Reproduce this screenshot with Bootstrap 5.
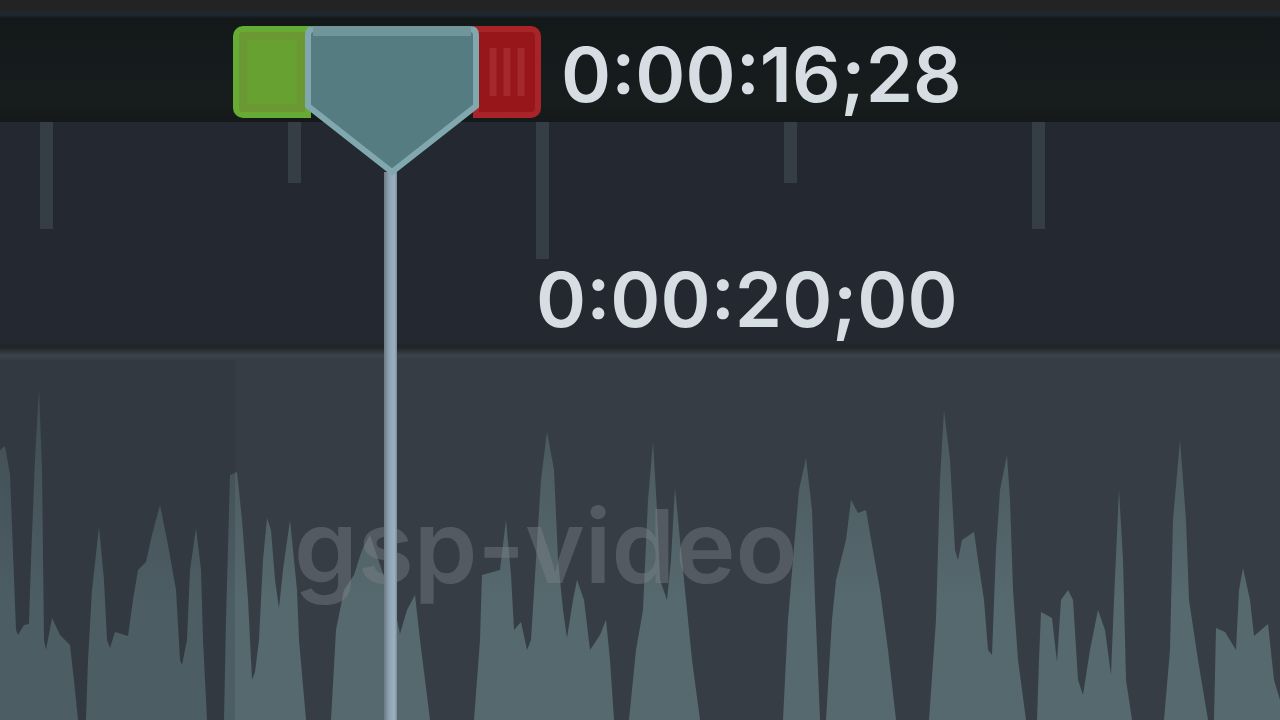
<!DOCTYPE html>
<html lang="en">
<head>
<meta charset="utf-8">
<meta name="viewport" content="width=device-width, initial-scale=1">
<title>Timeline</title>
<link href="https://cdn.jsdelivr.net/npm/bootstrap@5.3.0/dist/css/bootstrap.min.css" rel="stylesheet">
<style>
  body { background: #363d45; font-family: Inter, "Liberation Sans", sans-serif; }
  .top-edge { height: 18px; background: linear-gradient(#232323 0 10px, #20262e 11px 15px, #151b1d); }
  .scrub-bar { height: 104px; padding-left: 233px; background: linear-gradient(#131819, #161b1d 50%, #171c1c 80%, #15191b); }
  .timecode { font-size: 76px; line-height: 80px; font-weight: 600; color: #d6dde3; white-space: nowrap; }
  .scrub-time { padding-left: 20px; }
  .trim { height: 92px; border: 6px solid; }
  .trim-in { width: 78px; background: #67a132; border-color: #65ab34; border-radius: 10px 0 0 10px; box-shadow: inset 0 0 0 8px #6c9833; }
  .trim-out { width: 68px; margin-left: -6px; border-color: #a82428; border-radius: 0 10px 10px 0; background: #971619; }
  .trim-out svg { width: 44px; height: 48px; }
  .head-shape { width: 174px; height: 152px; margin-left: -6px; z-index: 3; }
  .head-line { left: 384px; top: 172px; bottom: 0; width: 13px; z-index: 2; background: linear-gradient(90deg, #6b7a86, #90a4b4 40%, #9bb0c2 80%, #7b8c99); }
  .ruler { height: 220px; padding-left: 40px; background: #242830; }
  .tick { flex: 0 0 248px; min-width: 0; }
  .tick::before { content: ""; display: block; width: 13px; height: 61px; background: #363e45; }
  .tick-mid::before { height: 107px; }
  .tick-major::before { height: 137px; }
  .track-edge { height: 18px; background: linear-gradient(#242830, #1e2427 5px, #2b3335 9px, #3c434a 13px, #363d45); }
  .earlier { width: 235px; background: rgba(34, 41, 48, .18); }
  .clip-name { left: 294px; top: 126px; font-size: 102px; line-height: 120px; font-weight: 600; color: rgba(126, 131, 138, .42); white-space: nowrap; }
</style>
</head>
<body>
<main class="d-flex flex-column vh-100 position-relative overflow-hidden">
  <div class="top-edge flex-shrink-0"></div>
  <div class="scrub-bar d-flex align-items-start flex-shrink-0 pt-2">
    <button type="button" class="trim trim-in p-0 flex-shrink-0" aria-label="Selection start"></button>
    <svg class="head-shape flex-shrink-0 position-relative" viewBox="0 0 174 152" role="img" aria-label="Playhead">
      <path d="M9 3H165Q171 3 171 9V80L87 146L3 80V9Q3 3 9 3Z" fill="#547c81" stroke="#80a8ae" stroke-width="6"/>
      <path d="M8 5H166" stroke="#70959b" stroke-width="10"/>
    </svg>
    <button type="button" class="trim trim-out p-0 d-flex align-items-center justify-content-center flex-shrink-0" aria-label="Selection end">
      <svg viewBox="0 0 44 48" aria-hidden="true"><path d="M8 0V48M22 0V48M36 0V48" stroke="#a5282c" stroke-width="7"/></svg>
    </button>
    <span class="timecode scrub-time pt-2">0:00:16;28</span>
  </div>
  <div class="ruler d-flex flex-shrink-0">
    <div class="tick tick-mid"></div>
    <div class="tick"></div>
    <div class="tick tick-major"><span class="timecode">0:00:20;00</span></div>
    <div class="tick"></div>
    <div class="tick tick-mid"></div>
  </div>
  <div class="track-edge flex-shrink-0"></div>
  <section class="flex-grow-1 position-relative overflow-hidden" aria-label="Audio track">
    <svg class="d-block w-100 h-100" viewBox="0 360 1280 360" preserveAspectRatio="none" aria-hidden="true">
      <defs>
        <linearGradient id="fade" gradientUnits="userSpaceOnUse" x1="0" y1="385" x2="0" y2="600">
          <stop offset="0" stop-color="#56696e" stop-opacity=".55"/>
          <stop offset="1" stop-color="#56696e"/>
        </linearGradient>
      </defs>
      <path fill="url(#fade)" d="M0 720V450L5 446L10 475L16 630L18 635L24 625L29 624L31 560L35 460L39 388L42 470L44 640L46 650L52 618L60 635L70 645L75 690L78 720H86L88 660L92 590L99 527L104 580L107 640L110 648L115 632L128 636L133 600L138 570L146 562L152 535L160 505L168 545L176 590L180 660L182 665L187 640L190 570L196 528L201 570L203 640L207 720H224L226 620L230 475L237 472L242 520L248 600L252 680L255 672L259 640L263 560L267 518L271 530L275 580L279 608L283 570L290 520L297 590L299 640L306 720H331L336 630L344 590L354 575L362 550L370 535L385 580L395 610L400 634L407 610L415 595L420 640L430 720H474L480 640L482 575L500 570L506 520L511 575L514 630L521 622L527 650L531 640L536 560L541 480L547 432L554 470L558 560L563 610L567 638L573 600L577 580L584 600L590 650L600 635L606 620L610 660L614 720H629L636 650L643 610L648 500L653 442L657 510L660 580L667 600L671 560L675 488L680 540L686 600L692 660L700 720H783L788 620L793 560L799 490L806 458L812 510L815 600L820 720H826L832 620L836 580L846 540L851 500L858 513L866 510L872 545L880 590L888 650L896 720H929L936 620L940 480L944 410L950 460L955 550L958 560L962 540L974 532L978 560L984 600L988 650L992 655L996 550L1000 490L1007 455L1010 500L1013 590L1018 660L1026 720H1037L1039 660L1041 612L1052 618L1057 662L1061 600L1068 590L1073 600L1078 680L1083 695L1090 650L1098 610L1105 630L1111 675L1114 600L1119 490L1123 560L1126 680L1132 720H1164L1170 650L1173 520L1180 440L1186 520L1189 600L1198 660L1208 720H1214L1216 628L1225 632L1236 650L1239 590L1243 568L1250 600L1254 636L1268 624L1274 680L1280 700V720Z"/>
    </svg>
    <div class="earlier position-absolute top-0 bottom-0 start-0"></div>
    <span class="clip-name position-absolute">gsp-video</span>
  </section>
  <div class="head-line position-absolute"></div>
</main>
<script src="https://cdn.jsdelivr.net/npm/bootstrap@5.3.0/dist/js/bootstrap.bundle.min.js"></script>
</body>
</html>
